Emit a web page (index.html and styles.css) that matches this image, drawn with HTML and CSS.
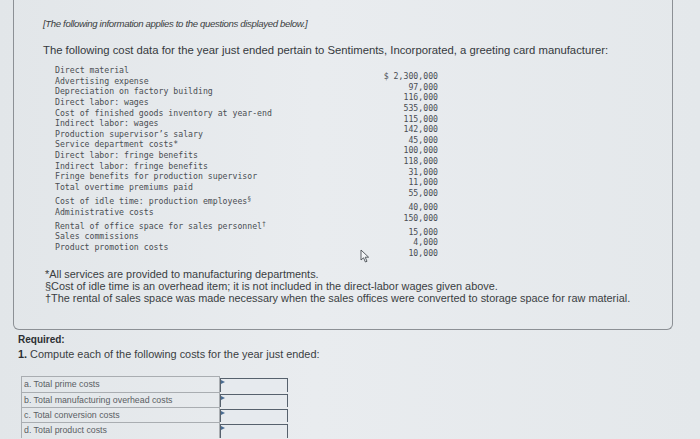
FILE: index.html
```html
<!DOCTYPE html>
<html>
<head>
<meta charset="utf-8">
<link rel="stylesheet" href="styles.css">
</head>
<body>
<div class="page">
  <div class="box">
    <p class="intro">[The following information applies to the questions displayed below.]</p>
    <p class="lead">The following cost data for the year just ended pertain to Sentiments, Incorporated, a greeting card manufacturer:</p>
    <div class="data">
      <div class="labels">
        <div class="row">Direct material</div>
        <div class="row">Advertising expense</div>
        <div class="row">Depreciation on factory building</div>
        <div class="row">Direct labor: wages</div>
        <div class="row">Cost of finished goods inventory at year-end</div>
        <div class="row">Indirect labor: wages</div>
        <div class="row">Production supervisor’s salary</div>
        <div class="row">Service department costs*</div>
        <div class="row">Direct labor: fringe benefits</div>
        <div class="row">Indirect labor: fringe benefits</div>
        <div class="row">Fringe benefits for production supervisor</div>
        <div class="row">Total overtime premiums paid</div>
        <div class="row gap">Cost of idle time: production employees<sup>§</sup></div>
        <div class="row">Administrative costs</div>
        <div class="row gap">Rental of office space for sales personnel<sup>†</sup></div>
        <div class="row">Sales commissions</div>
        <div class="row">Product promotion costs</div>
      </div>
      <div class="values">
        <div class="row">$ 2,300,000</div>
        <div class="row">97,000</div>
        <div class="row">116,000</div>
        <div class="row">535,000</div>
        <div class="row">115,000</div>
        <div class="row">142,000</div>
        <div class="row">45,000</div>
        <div class="row">100,000</div>
        <div class="row">118,000</div>
        <div class="row">31,000</div>
        <div class="row">11,000</div>
        <div class="row">55,000</div>
        <div class="row gap">40,000</div>
        <div class="row">150,000</div>
        <div class="row gap">15,000</div>
        <div class="row">4,000</div>
        <div class="row">10,000</div>
      </div>
      <svg class="cursor" width="10" height="14" viewBox="0 0 10 14"><path d="M1 1 L1 11 L3.5 8.8 L5.4 13 L7 12.3 L5.2 8.2 L8.6 8.2 Z" fill="#f4f6f8" stroke="#4a4f55" stroke-width="0.9" stroke-linejoin="round"/></svg>
    </div>
    <div class="notes">
      <p>*All services are provided to manufacturing departments.</p>
      <p>§Cost of idle time is an overhead item; it is not included in the direct-labor wages given above.</p>
      <p>†The rental of sales space was made necessary when the sales offices were converted to storage space for raw material.</p>
    </div>
  </div>
  <div class="required">
    <p class="req-title">Required:</p>
    <p class="req-q"><b>1.</b> Compute each of the following costs for the year just ended:</p>
    <div class="answers">
      <div class="ans-row"><div class="ans-label">a. Total prime costs</div><div class="ans-input"></div></div>
      <div class="ans-row"><div class="ans-label">b. Total manufacturing overhead costs</div><div class="ans-input"></div></div>
      <div class="ans-row"><div class="ans-label">c. Total conversion costs</div><div class="ans-input"></div></div>
      <div class="ans-row"><div class="ans-label">d. Total product costs</div><div class="ans-input"></div></div>
    </div>
  </div>
</div>
</body>
</html>
```
FILE: styles.css
```css
html, body {
  margin: 0;
  padding: 0;
}
body {
  background: #e5e9ec;
  color: #34383c;
  font-family: "Liberation Sans", Arial, sans-serif;
  width: 700px;
  height: 439px;
  overflow: hidden;
}
p { margin: 0; }
.page {
  background: linear-gradient(90deg, #e2e6e9 0%, #e9ecef 45%, #e4e8eb 100%);
  height: 439px;
}
.box {
  margin: 0 27px 0 13px;
  border: 1px solid #8c9095;
  border-top: 0;
  border-radius: 0 0 6px 6px;
  padding: 17px 0 25px 29px;
}
.intro {
  font-style: italic;
  font-size: 9.6px;
  letter-spacing: -0.35px;
  line-height: 13px;
  color: #3a3d41;
}
.lead {
  margin-top: 13px;
  font-size: 11.3px;
  line-height: 14px;
  color: #35393d;
}
.data {
  position: relative;
  display: flex;
  margin: 8px 0 0 12px;
  font-family: "DejaVu Sans Mono", "Liberation Mono", monospace;
  font-size: 8.2px;
  color: #4a4e53;
}
.data .row {
  height: 10.64px;
  line-height: 10.64px;
  white-space: pre;
}
.data .row.gap { margin-top: 3.4px; }
.data sup {
  font-size: 6.5px;
  line-height: 0;
  vertical-align: 3px;
}
.labels { width: 300px; }
.values {
  width: 83px;
  text-align: right;
  padding-top: 6px;
}
.cursor {
  position: absolute;
  left: 305px;
  top: 184px;
}
.notes {
  margin: 10px 0 0 2px;
  font-size: 10.9px;
  line-height: 12px;
  color: #3a3e42;
}
.required {
  padding: 4px 0 0 18px;
}
.req-title {
  font-weight: bold;
  font-size: 10px;
  line-height: 12px;
  color: #2c2f33;
}
.req-q {
  margin-top: 2px;
  font-size: 10.9px;
  line-height: 13px;
  color: #3a3e42;
}
.req-q b { color: #2c2f33; }
.answers {
  margin: 15px 0 0 3px;
  width: 267px;
}
.ans-row {
  display: flex;
  height: 15.3px;
}
.ans-label {
  width: 195px;
  border: 1px solid #a9adb1;
  border-bottom: 0;
  padding-left: 2px;
  font-size: 8.8px;
  line-height: 15px;
  color: #5a5e63;
  white-space: nowrap;
}
.ans-input {
  position: relative;
  flex: 1;
  margin-top: 2px;
  border: 1.5px solid #56616d;
  border-bottom: 0;
  background: #e6eaee;
}
.ans-input::before {
  content: "";
  position: absolute;
  left: 0;
  top: 1px;
  border-left: 4px solid #4a6c92;
  border-top: 2.5px solid transparent;
  border-bottom: 2.5px solid transparent;
}
```
